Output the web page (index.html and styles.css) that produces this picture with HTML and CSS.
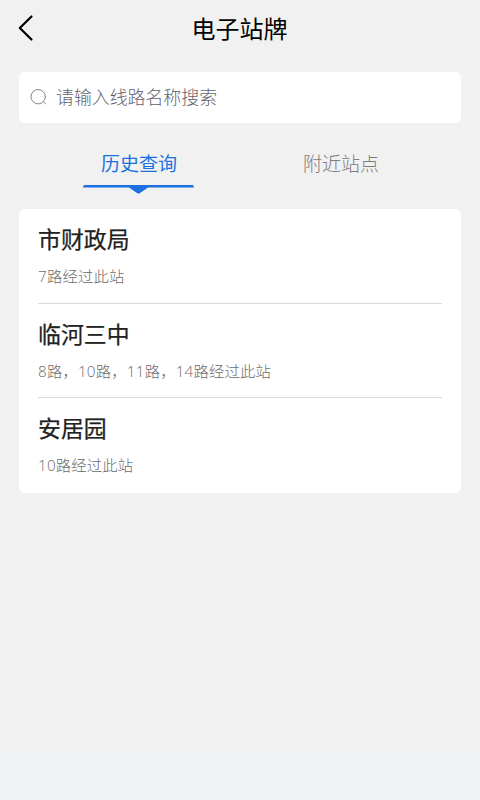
FILE: index.html
```html
<!DOCTYPE html>
<html lang="zh-CN">
<head>
<meta charset="utf-8">
<title>电子站牌</title>
<link rel="stylesheet" href="styles.css">
</head>
<body>
<div class="screen">
  <header class="header">
    <svg class="back" viewBox="0 0 18 28"><path d="M14.5 2.5 2.8 14l11.7 11.5" fill="none" stroke="#000" stroke-width="2.2" stroke-linecap="round" stroke-linejoin="round"/></svg>
    <h1 class="title">电子站牌</h1>
  </header>
  <div class="search">
    <svg class="search-icon" viewBox="0 0 18 18"><g fill="none" stroke="#858590" stroke-width="1" stroke-linecap="round"><circle cx="8.2" cy="8.7" r="7.2"/><path d="m13.4 13.7 2.2 2.2"/></g></svg>
    <span class="placeholder">请输入线路名称搜索</span>
  </div>
  <nav class="tabs">
    <div class="tab tab-active">历史查询
      <svg class="indicator" viewBox="0 0 111 10"><path d="M1.5 0h108q1.5 0 1.5 2.5H65L57 8q-1.5 1-3 0L46 2.5H0Q0 0 1.5 0Z" fill="#1c70e0"/></svg>
    </div>
    <div class="tab">附近站点</div>
  </nav>
  <main class="list">
    <section class="stop"><h2 class="name">市财政局</h2><p class="routes">7路经过此站</p></section>
    <section class="stop"><h2 class="name">临河三中</h2><p class="routes">8路，10路，11路，14路经过此站</p></section>
    <section class="stop"><h2 class="name">安居园</h2><p class="routes">10路经过此站</p></section>
  </main>
  <footer class="bottom"></footer>
</div>
</body>
</html>
```
FILE: styles.css
```css
* { box-sizing: border-box; }
body { margin: 0; font-family: "Noto Sans CJK SC", sans-serif; }
.screen { display: flex; flex-direction: column; width: 480px; height: 800px; background: #f1f1f1; }
.header { display: grid; grid-template-columns: 60px 1fr 60px; align-items: center; height: 58px; }
.back { width: 18px; height: 28px; margin: -2px 0 0 17px; }
.title { margin: -2px 0 0 -1px; font-size: 24px; font-weight: 400; line-height: 36px; text-align: center; color: #000; }
.search { display: flex; align-items: center; height: 51px; margin: 13.6px 19px 0; padding-left: 11px; background: #fff; border-radius: 6px; }
.search-icon { width: 18px; height: 18px; margin-right: 8px; }
.placeholder { margin-top: -2px; font-size: 17.9px; font-weight: 300; line-height: 28px; color: #62626c; }
.tabs { display: grid; grid-template-columns: 202px 202px; justify-content: center; height: 86.4px; padding-top: 26.4px; }
.tab { display: flex; flex-direction: column; align-items: center; font-size: 19px; font-weight: 300; line-height: 28px; color: #7c7c7c; }
.tab-active { font-weight: 400; color: #1c70e0; }
.indicator { width: 111px; height: 10px; margin: 8px 1px 0 0; }
.list { height: 284px; margin: 0 19px; padding: 0 19px; background: #fff; border-radius: 6px; }
.stop { height: 94.7px; padding-top: 12px; border-bottom: 1px solid #dadada; }
.stop:last-child { border-bottom: 0; }
.name { margin: 0; font-size: 22.9px; font-weight: 400; line-height: 34px; color: #222; -webkit-text-stroke: 0.25px #222; }
.routes { margin: 9px 0 0; font-family: "Open Sans", "Noto Sans CJK SC", sans-serif; font-size: 15.3px; font-weight: 300; line-height: 24px; letter-spacing: 0.2px; color: #6c6c6c; }
.bottom { height: 48px; margin-top: auto; background: #f0f1f5; }
```
